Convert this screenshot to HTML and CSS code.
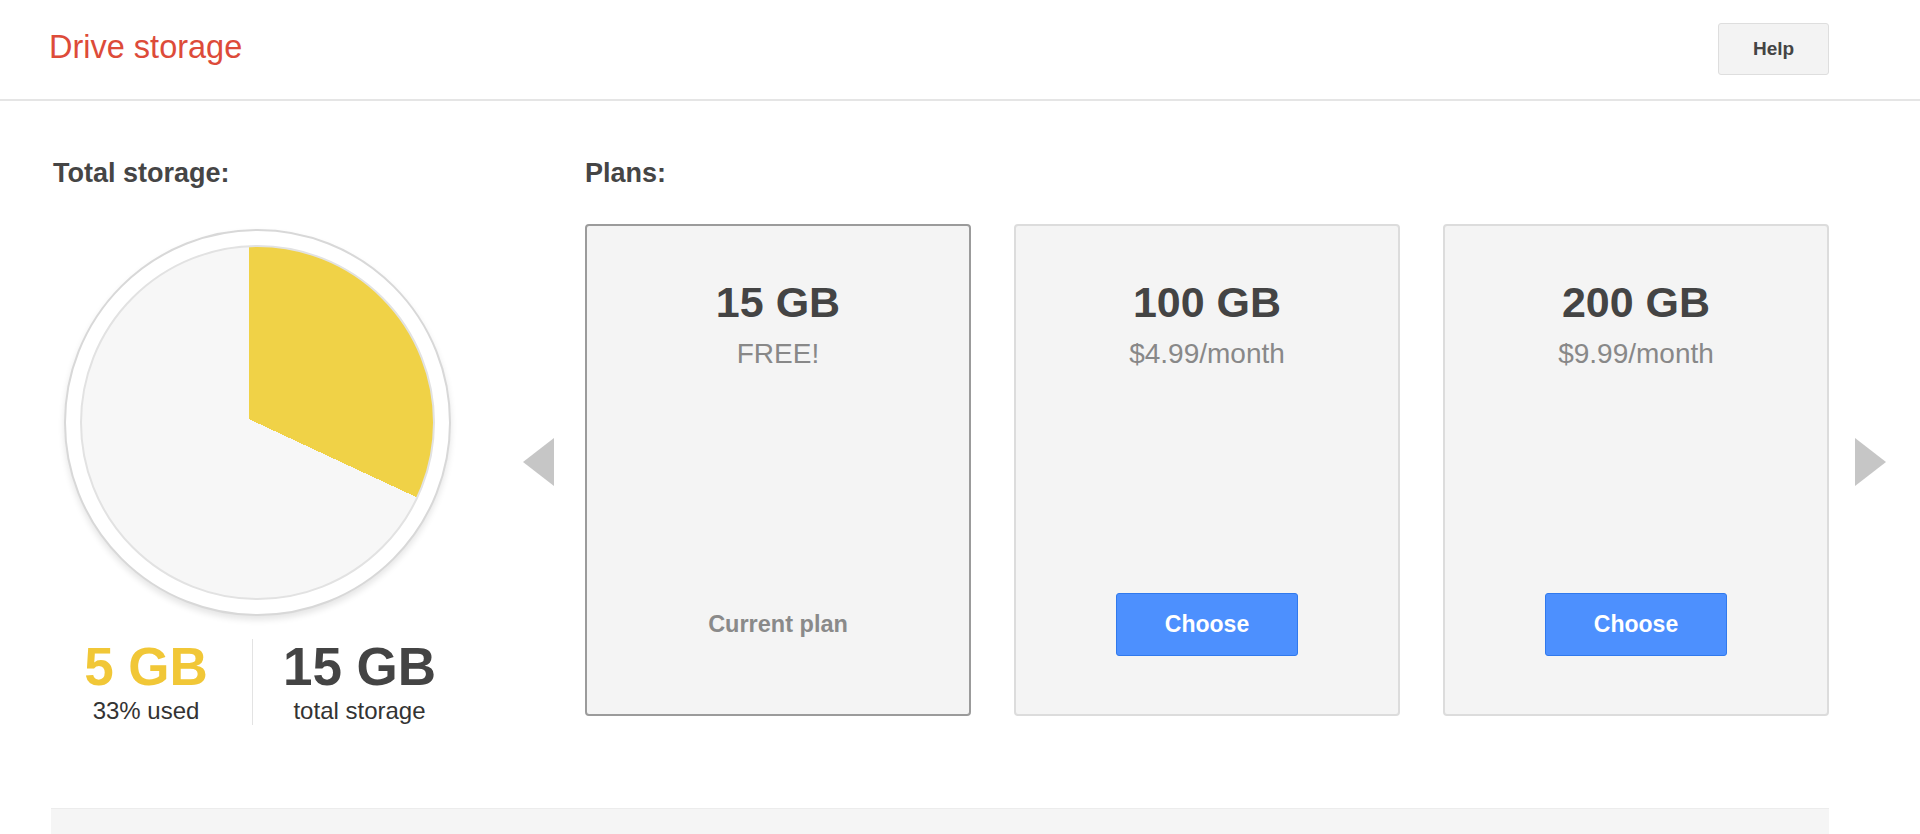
FILE: index.html
```html
<!DOCTYPE html>
<html lang="en">
<head>
<meta charset="utf-8">
<title>Drive storage</title>
<link rel="stylesheet" href="styles.css">
</head>
<body>
<header class="topbar">
  <h1 class="title">Drive storage</h1>
  <button class="help-btn" type="button">Help</button>
</header>
<main class="content">
  <section class="storage">
    <h2 class="label">Total storage:</h2>
    <div class="pie-outer"><div class="pie"></div></div>
    <div class="stats">
      <div class="stat">
        <div class="stat-num used">5 GB</div>
        <div class="stat-cap">33% used</div>
      </div>
      <div class="stat-divider"></div>
      <div class="stat">
        <div class="stat-num">15 GB</div>
        <div class="stat-cap">total storage</div>
      </div>
    </div>
  </section>
  <section class="plans">
    <h2 class="label plans-label">Plans:</h2>
    <div class="carousel">
      <button class="arrow" type="button" aria-label="Previous">
        <svg width="31" height="48" viewBox="0 0 31 48"><polygon points="31,0 31,48 0,24" fill="#c6c6c6"/></svg>
      </button>
      <div class="cards">
        <div class="card current">
          <div class="card-size">15 GB</div>
          <div class="card-price">FREE!</div>
          <div class="card-action current-label">Current plan</div>
        </div>
        <div class="card">
          <div class="card-size">100 GB</div>
          <div class="card-price">$4.99/month</div>
          <div class="card-action"><button class="choose-btn" type="button">Choose</button></div>
        </div>
        <div class="card">
          <div class="card-size">200 GB</div>
          <div class="card-price">$9.99/month</div>
          <div class="card-action"><button class="choose-btn" type="button">Choose</button></div>
        </div>
      </div>
      <button class="arrow" type="button" aria-label="Next">
        <svg width="31" height="48" viewBox="0 0 31 48"><polygon points="0,0 0,48 31,24" fill="#c6c6c6"/></svg>
      </button>
    </div>
  </section>
</main>
<div class="bottom-bar"></div>
</body>
</html>
```

FILE: styles.css
```css
* { box-sizing: border-box; }

html, body {
  margin: 0;
  padding: 0;
  background: #ffffff;
  font-family: "Liberation Sans", Arial, sans-serif;
  overflow: hidden;
}

.topbar {
  height: 101px;
  display: flex;
  align-items: center;
  justify-content: space-between;
  padding: 0 91px 2px 49px;
  border-bottom: 2px solid #e5e5e5;
}

.title {
  margin: 0 0 4px 0;
  font-size: 32.5px;
  font-weight: normal;
  color: #dd4b39;
  line-height: 40px;
}

.help-btn {
  width: 111px;
  height: 52px;
  background: #f3f3f3;
  border: 1px solid #dedede;
  border-radius: 3px;
  font-family: "Liberation Sans", Arial, sans-serif;
  font-weight: bold;
  font-size: 19px;
  color: #444;
  padding: 0;
}

.content {
  display: flex;
  padding: 57px 0 0 51px;
}

.label {
  margin: 0;
  font-size: 27px;
  line-height: 30px;
  font-weight: bold;
  color: #454545;
  padding-left: 2px;
}

.storage {
  width: 412px;
  flex: none;
  display: flex;
  flex-direction: column;
}

.storage .label {
  margin-bottom: 41px;
}

.pie-outer {
  align-self: center;
  width: 387px;
  height: 387px;
  border-radius: 50%;
  background: #ffffff;
  border: 2px solid #d8d8d8;
  box-shadow: 0 4px 6px rgba(0, 0, 0, 0.10);
  padding: 14px;
}

.pie {
  width: 100%;
  height: 100%;
  border-radius: 50%;
  border: 2px solid #e2e2e2;
  background: conic-gradient(from 0deg at 47.5% 49%, #f0d247 0deg 115deg, #f7f7f7 115deg 360deg);
}

.stats {
  display: grid;
  grid-template-columns: 190px 1px 1fr;
  column-gap: 11px;
  width: 404px;
  margin-top: 23px;
}

.stat {
  text-align: center;
}

.stat-num {
  font-size: 53px;
  line-height: 56px;
  font-weight: bold;
  color: #444;
}

.stat-num.used {
  color: #f1c737;
}

.stat-cap {
  margin-top: 2px;
  font-size: 24px;
  line-height: 28px;
  color: #333;
}

.stat-divider {
  background: #e3e3e3;
  width: 1px;
  height: 86px;
}

.plans {
  margin-left: 60px;
  display: flex;
  flex-direction: column;
}

.plans-label {
  padding-left: 62px;
  margin-bottom: 36px;
}

.carousel {
  display: flex;
  align-items: center;
}

.arrow {
  flex: none;
  background: none;
  border: 0;
  padding: 0;
  width: 31px;
  height: 48px;
  margin-bottom: 16px;
  display: flex;
}

.cards {
  display: flex;
  gap: 43px;
  margin: 0 26px 0 31px;
}

.card {
  width: 386px;
  height: 492px;
  background: #f4f4f4;
  border: 2px solid #dcdcdc;
  border-radius: 4px;
  display: flex;
  flex-direction: column;
  align-items: center;
  padding: 51px 0 58px;
}

.card.current {
  border-color: #9b9b9b;
}

.card-size {
  font-size: 43px;
  line-height: 50px;
  font-weight: bold;
  color: #444;
}

.card-price {
  margin-top: 11px;
  font-size: 28px;
  line-height: 32px;
  color: #888;
}

.card-action {
  margin-top: auto;
  height: 63px;
  display: flex;
  align-items: center;
  justify-content: center;
}

.current-label {
  font-size: 23.5px;
  font-weight: bold;
  color: #8a8a8a;
}

.choose-btn {
  width: 182px;
  height: 63px;
  background: #4d90fe;
  border: 1px solid #3079ed;
  border-radius: 3px;
  color: #ffffff;
  font-family: "Liberation Sans", Arial, sans-serif;
  font-size: 23px;
  font-weight: bold;
  padding: 0;
}

.bottom-bar {
  margin: 83px 0 0 51px;
  width: 1778px;
  height: 40px;
  background: #f5f5f5;
  border-top: 1px solid #ececec;
}
```
